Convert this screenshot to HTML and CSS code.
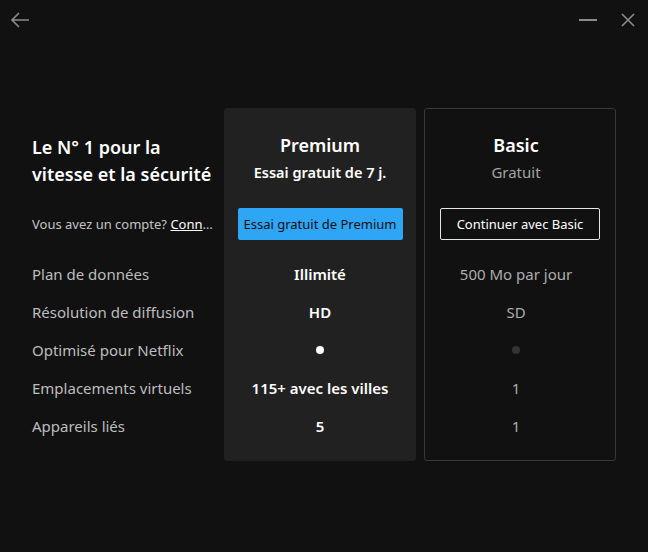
FILE: index.html
```html
<!DOCTYPE html>
<html lang="fr">
<head>
  <meta charset="UTF-8">
  <meta name="viewport" content="width=device-width, initial-scale=1.0">
  <title>Choisir un forfait</title>
  <link rel="stylesheet" href="styles.css">
</head>
<body>
  <header class="titlebar">
    <button class="icon-btn back" aria-label="Retour">
      <svg width="20" height="20" viewBox="0 0 20 20"><path d="M19 10H2.5M9 3l-7 7 7 7" fill="none" stroke="#8c8c8c" stroke-width="1.6"/></svg>
    </button>
    <div class="window-btns">
      <button class="icon-btn" aria-label="Réduire">
        <svg width="20" height="20" viewBox="0 0 20 20"><path d="M1 10h18" stroke="#8c8c8c" stroke-width="2"/></svg>
      </button>
      <button class="icon-btn" aria-label="Fermer">
        <svg width="14" height="14" viewBox="0 0 14 14"><path d="M1 1l12 12M13 1L1 13" stroke="#8c8c8c" stroke-width="1.6"/></svg>
      </button>
    </div>
  </header>

  <main class="plans">
    <section class="col col-labels">
      <h1 class="pitch">Le N° 1 pour la vitesse et la sécurité</h1>
      <div class="action">
        <p class="login">Vous avez un compte? <a href="#">Connexion</a></p>
      </div>
      <ul class="rows">
        <li>Plan de données</li>
        <li>Résolution de diffusion</li>
        <li>Optimisé pour Netflix</li>
        <li>Emplacements virtuels</li>
        <li>Appareils liés</li>
      </ul>
    </section>

    <section class="col col-premium">
      <h2 class="plan-name">Premium</h2>
      <p class="plan-sub">Essai gratuit de 7 j.</p>
      <div class="action">
        <button class="btn btn-primary">Essai gratuit de Premium</button>
      </div>
      <ul class="rows">
        <li>Illimité</li>
        <li>HD</li>
        <li><span class="dot"></span></li>
        <li>115+ avec les villes</li>
        <li>5</li>
      </ul>
    </section>

    <section class="col col-basic">
      <h2 class="plan-name">Basic</h2>
      <p class="plan-sub">Gratuit</p>
      <div class="action">
        <button class="btn btn-outline">Continuer avec Basic</button>
      </div>
      <ul class="rows">
        <li>500 Mo par jour</li>
        <li>SD</li>
        <li><span class="dot"></span></li>
        <li>1</li>
        <li>1</li>
      </ul>
    </section>
  </main>
</body>
</html>
```

FILE: styles.css
```css
body {
  font-family: "Noto Sans", "Open Sans", sans-serif;
  background-color: #111111;
  color: #ffffff;
  margin: 0;
  padding: 0;
  height: 552px;
  overflow: hidden;
}
.titlebar {
  height: 40px;
  display: flex;
  justify-content: space-between;
  align-items: center;
  padding: 0 10px;
}
.window-btns {
  display: flex;
  align-items: center;
  gap: 23px;
  padding-right: 3px;
}
.icon-btn {
  background: none;
  border: none;
  padding: 0;
  display: flex;
}
.plans {
  display: grid;
  grid-template-columns: 184px 192px 192px;
  gap: 8px;
  padding: 68px 32px 0;
}
.col {
  box-sizing: border-box;
  height: 353px;
  border: 1px solid transparent;
  border-radius: 3px;
  padding-top: 23px;
  text-align: center;
}
.col-premium {
  background-color: #212121;
  border-color: #212121;
}
.col-basic {
  border-color: #383838;
}
.col-basic .plan-name,
.col-basic .plan-sub,
.col-basic .rows {
  padding-right: 8px;
}
.col-labels {
  text-align: left;
  border: none;
  padding-top: 24px;
}
.pitch {
  margin: 0;
  padding-top: 2px;
  font-size: 18px;
  font-weight: 600;
  line-height: 27px;
}
.col-labels .action {
  margin-top: 20px;
}
.plan-name {
  margin: 0;
  font-size: 18px;
  font-weight: 600;
  line-height: 27px;
}
.plan-sub {
  margin: 0;
  font-size: 14.5px;
  font-weight: 600;
  line-height: 27px;
}
.col-basic .plan-sub {
  font-size: 15px;
  font-weight: 400;
  color: #a3a3a3;
}
.action {
  height: 32px;
  margin-top: 22px;
  display: flex;
  align-items: center;
  justify-content: center;
}
.login {
  margin: 0;
  width: 100%;
  font-size: 13px;
  color: #c4c4c4;
  white-space: nowrap;
  overflow: hidden;
  text-overflow: ellipsis;
}
.login a {
  color: #ffffff;
}
.btn {
  font-family: inherit;
  font-size: 13px;
  height: 32px;
  border-radius: 2px;
  padding: 0;
}
.btn-primary {
  width: 165px;
  background-color: #2ea5f5;
  border: none;
  color: #111111;
}
.btn-outline {
  width: 160px;
  background: none;
  border: 1px solid #e6e6e6;
  color: #ffffff;
}
.rows {
  list-style: none;
  margin: 15px 0 0;
  padding: 0;
}
.rows li {
  height: 38px;
  display: flex;
  align-items: center;
  justify-content: center;
  font-size: 15px;
}
.col-labels .rows li {
  justify-content: flex-start;
  color: #bdbdbd;
}
.col-premium .rows li {
  font-weight: 600;
}
.col-basic .rows li {
  color: #adadad;
}
.dot {
  width: 8px;
  height: 8px;
  border-radius: 50%;
  background-color: #ffffff;
}
.col-basic .dot {
  background-color: #333333;
}
```
